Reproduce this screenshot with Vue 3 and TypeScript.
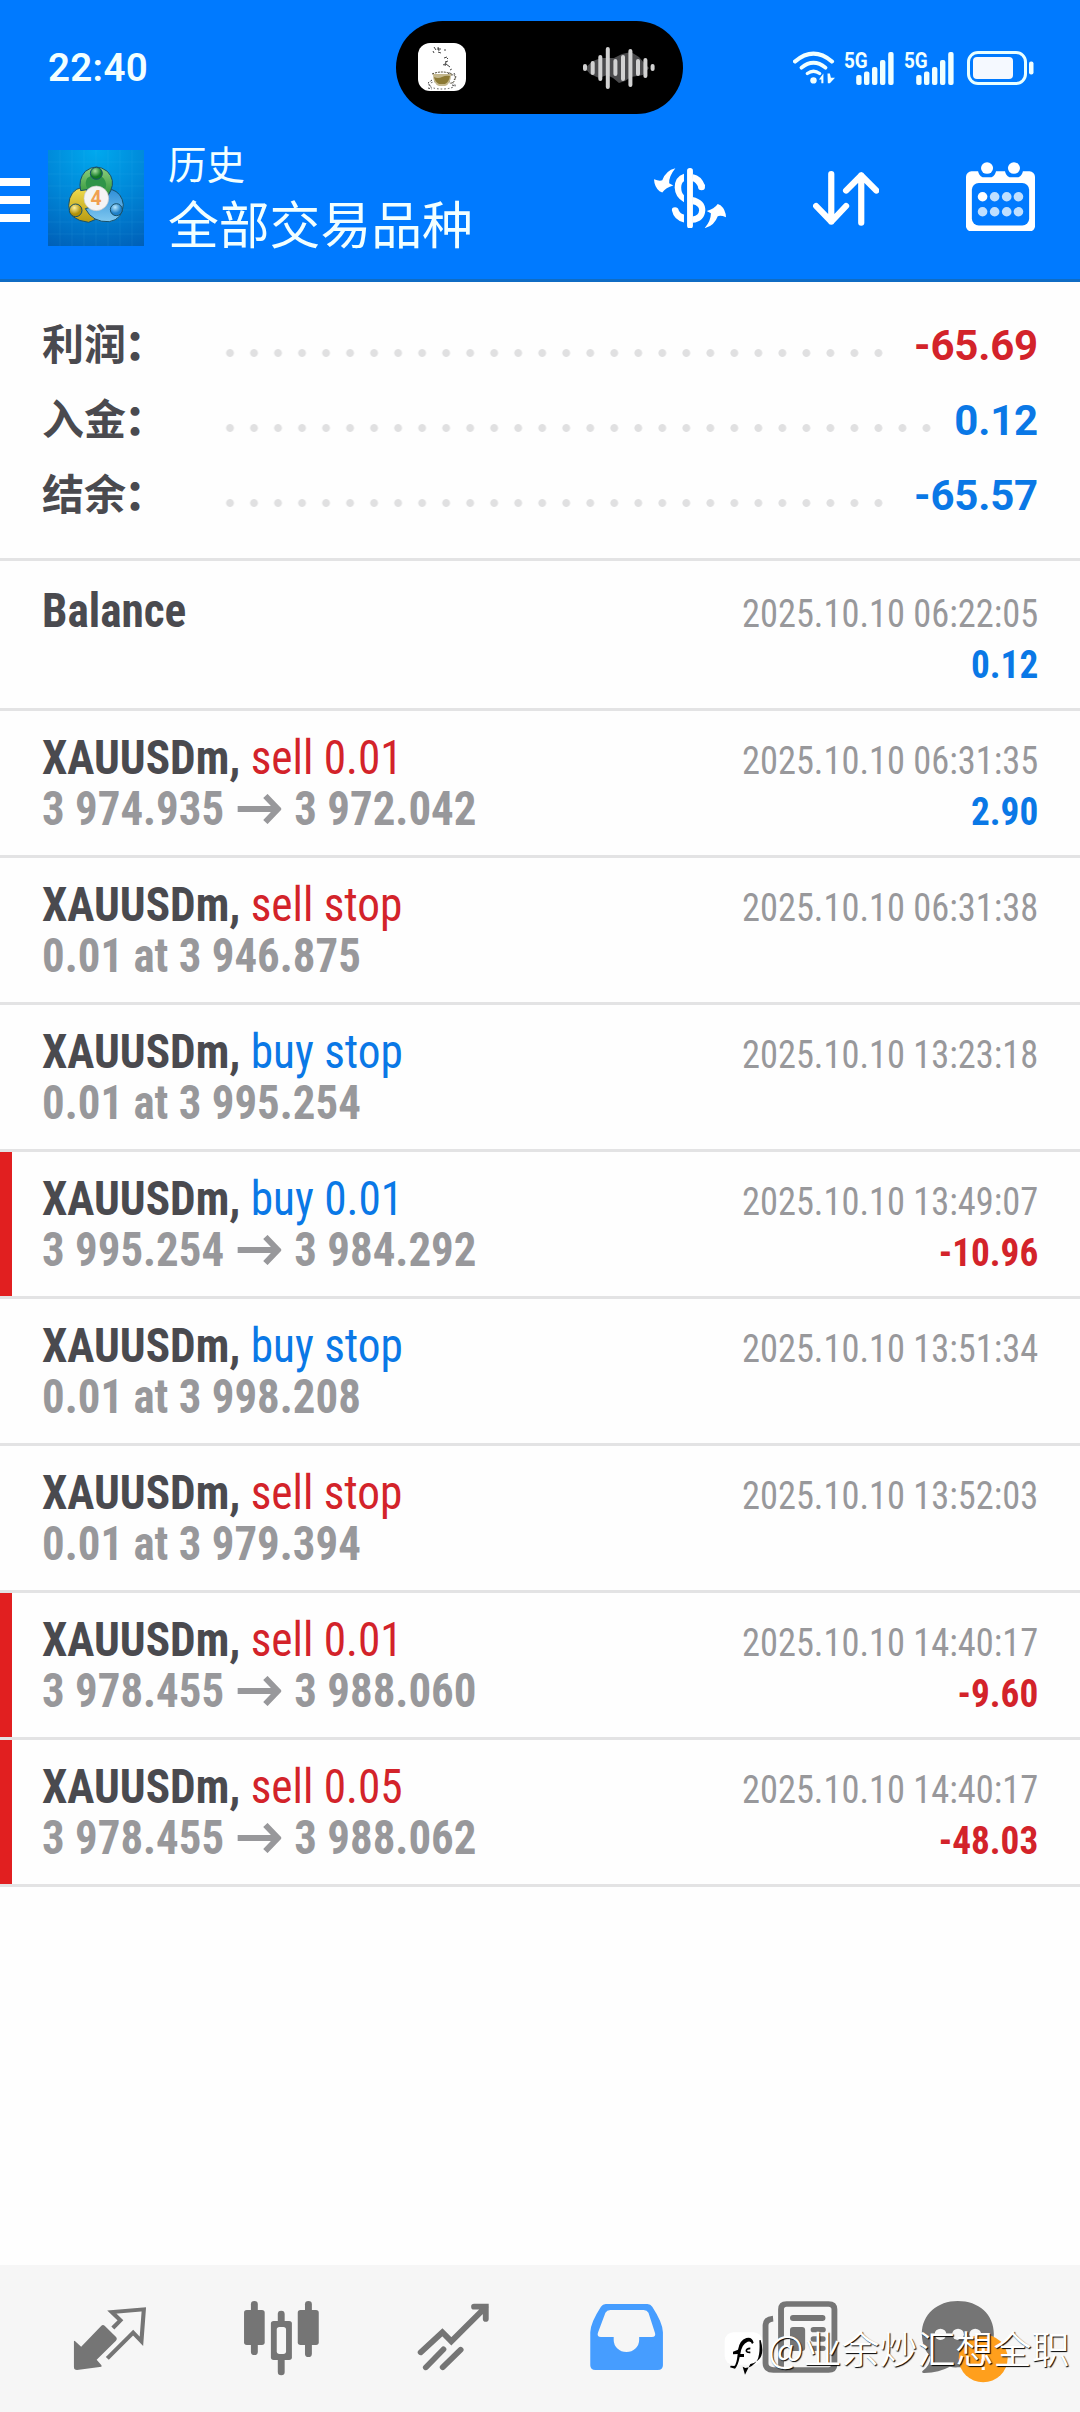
<script setup lang="ts">
interface Summary { label: string; value: string; tone: 'red' | 'blue'; dots: number }
interface Deal {
  symbol: string
  action?: string
  tone?: 'red' | 'blue'
  from?: string
  to?: string
  note?: string
  time: string
  profit?: string
  profitTone?: 'red' | 'blue'
  loss?: boolean
}

const summary: Summary[] = [
  { label: '利润', value: '-65.69', tone: 'red', dots: 28 },
  { label: '入金', value: '0.12', tone: 'blue', dots: 30 },
  { label: '结余', value: '-65.57', tone: 'blue', dots: 28 },
]

const deals: Deal[] = [
  { symbol: 'Balance', time: '2025.10.10 06:22:05', profit: '0.12', profitTone: 'blue' },
  { symbol: 'XAUUSDm,', action: 'sell 0.01', tone: 'red', from: '3 974.935', to: '3 972.042', time: '2025.10.10 06:31:35', profit: '2.90', profitTone: 'blue' },
  { symbol: 'XAUUSDm,', action: 'sell stop', tone: 'red', note: '0.01 at 3 946.875', time: '2025.10.10 06:31:38' },
  { symbol: 'XAUUSDm,', action: 'buy stop', tone: 'blue', note: '0.01 at 3 995.254', time: '2025.10.10 13:23:18' },
  { symbol: 'XAUUSDm,', action: 'buy 0.01', tone: 'blue', from: '3 995.254', to: '3 984.292', time: '2025.10.10 13:49:07', profit: '-10.96', profitTone: 'red', loss: true },
  { symbol: 'XAUUSDm,', action: 'buy stop', tone: 'blue', note: '0.01 at 3 998.208', time: '2025.10.10 13:51:34' },
  { symbol: 'XAUUSDm,', action: 'sell stop', tone: 'red', note: '0.01 at 3 979.394', time: '2025.10.10 13:52:03' },
  { symbol: 'XAUUSDm,', action: 'sell 0.01', tone: 'red', from: '3 978.455', to: '3 988.060', time: '2025.10.10 14:40:17', profit: '-9.60', profitTone: 'red', loss: true },
  { symbol: 'XAUUSDm,', action: 'sell 0.05', tone: 'red', from: '3 978.455', to: '3 988.062', time: '2025.10.10 14:40:17', profit: '-48.03', profitTone: 'red', loss: true },
]

const wave: [number, number, number][] = [
  [4, 20, 27], [11.7, 17, 31], [19.3, 11, 37], [26.8, 3, 45], [34.4, 15, 32],
  [42, 11, 37], [49.4, 5, 43], [57, 15, 32], [64.4, 14, 34], [71.6, 20, 27],
]
const signalBars: [number, number][] = [[11.2, 24], [19, 20.5], [27, 16], [35, 9], [43.2, 1]]
</script>

<template>
  <div class="screen">
    <header class="top">
      <div class="status">
        <span class="clock">22:40</span>
        <div class="island">
          <svg class="cup" viewBox="0 0 48 48">
            <rect width="48" height="48" rx="12" fill="#fff" />
            <g fill="none" stroke="#444" stroke-width="1">
              <path d="M16 4l2 3M15 8l1 2M20 4l1 4M19 6h4M20 9l3 1M26 7h2" />
              <path d="M26 15l3-1M29 15l1 1M27 19l3-1M28 19l-1 4M25 22l2-1M28 21l4 3" />
              <path d="M32 27l2-1M30 31l3-2M36 30l2 4-2 3M14 37l-4 3 3 4M34 42l4 1M10 45l4 1" stroke-dasharray="2 1.5" />
            </g>
            <ellipse cx="24" cy="42" rx="13" ry="4" fill="none" stroke="#555" stroke-width="1" stroke-dasharray="1.5 2" />
            <path d="M15 31h18q0 10-6 12h-6q-6-2-6-12z" fill="#c4b88e" />
            <path d="M16 34q4 2 8 0t8-1q-1 6-5 8h-6q-4-2-5-7z" fill="#8c7a35" />
            <path d="M33 32q5-1 4 4t-6 4M14 31q10-4 20 0" fill="none" stroke="#4b4530" stroke-width="1" stroke-dasharray="2 1" />
          </svg>
          <svg class="wave" viewBox="0 0 76 48">
            <path d="M4 24l8-7 8-3h13l8-4 9-2 8 5 6 7 4 4-6 7-12 2-6 4-6 2-6-5-6-3-8 3-9-4z" fill="#4b4b4d" />
            <path v-for="b in wave" :key="b[0]" :d="`M${b[0]} ${b[1] + 2}V${b[2] - 2}`" stroke="#d2d2d2" stroke-width="4" stroke-linecap="round" />
          </svg>
        </div>
        <div class="indicators">
          <svg class="wifi" viewBox="735 150 123 104" preserveAspectRatio="none" fill="none" stroke="#f0ffff" stroke-linecap="round">
            <path d="M741 182Q795 134 849 182" stroke-width="12.500" />
            <path d="M760 201Q795 171 830 201" stroke-width="11.500" />
            <path d="M777 219Q795 205 813 219" stroke-width="10" />
            <circle cx="795" cy="240" r="9.500" fill="#f0ffff" stroke="none" />
            <path d="M811 237L824 219V249H818V237zM836 219H843L846 232H858L843 249H837z" fill="#f0ffff" stroke="none" />
          </svg>
          <div v-for="n in 2" :key="n" class="signal">
            <span class="net">5G</span>
            <svg viewBox="0 0 50 34">
              <rect v-for="b in signalBars" :key="b[0]" :x="b[0]" :y="b[1]" width="5.4" :height="34 - b[1]" rx="2" fill="#f0ffff" />
            </svg>
          </div>
          <svg class="battery" viewBox="0 0 68 34">
            <rect x="1.5" y="1.5" width="57" height="31" rx="9.5" fill="none" stroke="#e8ffff" stroke-width="3" />
            <rect x="6" y="6" width="40" height="22" rx="4" fill="#f5f9ff" />
            <rect x="62" y="10.500" width="4.500" height="13" rx="2" fill="#f0ffff" />
          </svg>
        </div>
      </div>

      <div class="toolbar">
        <div class="menu"><i></i><i></i><i></i></div>
        <svg class="logo" viewBox="0 0 288 288">
          <defs>
            <radialGradient id="sky" cx=".5" cy="0" r="1.1"><stop offset="0" stop-color="#00a9ee" /><stop offset=".5" stop-color="#0087d8" /><stop offset="1" stop-color="#0060b8" /></radialGradient>
            <linearGradient id="green" x1="0" y1="0" x2="0" y2="1"><stop offset="0" stop-color="#8fd080" /><stop offset="1" stop-color="#1e8a2c" /></linearGradient>
            <linearGradient id="gold" x1="0" y1="0" x2="0" y2="1"><stop offset="0" stop-color="#f0dc50" /><stop offset="1" stop-color="#b89a10" /></linearGradient>
            <linearGradient id="aqua" x1="0" y1="0" x2="0" y2="1"><stop offset="0" stop-color="#2f8fd8" /><stop offset="1" stop-color="#80c8f0" /></linearGradient>
            <radialGradient id="bg" cx=".4" cy=".3"><stop offset="0" stop-color="#a8e0a0" /><stop offset="1" stop-color="#127a24" /></radialGradient>
            <radialGradient id="by" cx=".4" cy=".3"><stop offset="0" stop-color="#fff3a0" /><stop offset="1" stop-color="#b09008" /></radialGradient>
            <radialGradient id="bb" cx=".4" cy=".3"><stop offset="0" stop-color="#b8e8ff" /><stop offset="1" stop-color="#1f80c8" /></radialGradient>
          </defs>
          <rect width="288" height="288" fill="url(#sky)" />
          <path d="M36 0V288M72 0V288M108 0V288M144 0V288M180 0V288M216 0V288M252 0V288M0 36H288M0 72H288M0 108H288M0 144H288M0 180H288M0 216H288M0 252H288" stroke="#5cc8f0" stroke-opacity=".14" stroke-width="2" />
          <g stroke="#17506a" stroke-width="3">
            <path d="M104 112Q64 118 62 166Q60 210 122 217L150 205L120 165L116 116z" fill="url(#gold)" />
            <path d="M190 118Q222 128 226 164Q224 208 184 215Q134 218 112 176L168 160z" fill="url(#aqua)" />
            <path d="M112 64Q145 38 178 64Q203 90 188 122L172 150L160 112L98 122Q90 88 112 64z" fill="url(#green)" />
            <path d="M118 84Q145 62 168 86Q178 100 172 116L118 116Q108 98 118 84z" fill="#2f9448" stroke="none" />
            <circle cx="145" cy="70" r="18" fill="url(#bg)" />
            <circle cx="83" cy="181" r="19" fill="url(#by)" />
            <circle cx="205" cy="179" r="18" fill="url(#bb)" />
          </g>
          <circle cx="145" cy="145" r="37" fill="#f4f4f4" stroke="#c8c8c8" stroke-width="2" />
          <text x="144" y="165" text-anchor="middle" font-size="58" font-weight="700" fill="#f0a050" font-family="Roboto, sans-serif">4</text>
        </svg>
        <div class="titles">
          <span class="sub">历史</span>
          <span class="main">全部交易品种</span>
        </div>
        <div class="tools">
          <svg class="dollar" viewBox="331 503 209 182" preserveAspectRatio="none" fill="none" stroke="#fff">
            <rect x="427" y="503" width="17" height="182" rx="8" fill="#fff" stroke="none" />
            <path d="M443 532Q461 535 470 560" stroke-width="20" />
            <circle cx="469" cy="560" r="10" fill="#fff" stroke="none" />
            <path d="M418 520Q391 529 391 562Q392 592 418 606V585Q410 578 410 562Q410 548 418 543z" fill="#fff" stroke="none" />
            <path d="M443 590Q480 599 480 630Q478 664 443 668V649Q461 646 462 630Q462 616 443 612z" fill="#fff" stroke="none" />
            <path d="M383 631Q382 621 392 621Q401 621 403 631Q408 642 418 643V667Q389 660 383 631z" fill="#fff" stroke="none" />
            <path d="M331 537Q346 543 355 540Q365 511 393 504Q374 528 375 549L387 556Q365 562 355 577L347 573Q332 560 331 537z" fill="#fff" stroke="none" />
            <path transform="rotate(180 435.5 594)" d="M331 537Q346 543 355 540Q365 511 393 504Q374 528 375 549L387 556Q365 562 355 577L347 573Q332 560 331 537z" fill="#fff" stroke="none" />
          </svg>
          <svg class="sort" viewBox="792 512 193 165" preserveAspectRatio="none" fill="none" stroke="#fff" stroke-width="18" stroke-linecap="round" stroke-linejoin="round">
            <path d="M845 521V664M801 617L845 664L888 617M932 667V525M888 571L932 525L976 571" />
          </svg>
          <svg class="calendar" viewBox="1237 485 200 208" preserveAspectRatio="none">
            <rect x="1237" y="513" width="200" height="180" rx="16" fill="#fff" />
            <rect x="1254" y="548" width="166" height="127" rx="20" fill="#007aff" />
            <path d="M1272 512A26 26 0 0 0 1285 531H1311A26 26 0 0 0 1324 512zM1350 512A26 26 0 0 0 1363 531H1389A26 26 0 0 0 1402 512z" fill="#007aff" />
            <circle cx="1298" cy="503" r="17.500" fill="#fff" /><circle cx="1376" cy="503" r="17.500" fill="#fff" />
            <template v-for="y in [589, 634]" :key="y">
              <circle v-for="x in [1285, 1320, 1355, 1389]" :key="x" :cx="x" :cy="y" r="14" :fill="x === 1285 && y === 589 ? '#fff' : '#bfdfff'" />
            </template>
          </svg>
        </div>
      </div>
    </header>

    <section class="summary">
      <div v-for="s in summary" :key="s.label" class="sum-row">
        <span class="label">{{ s.label }}<span class="colon">：</span></span>
        <span class="dots" :style="{ width: s.dots * 24.02 + 'px' }"></span>
        <span class="sum-value" :class="s.tone">{{ s.value }}</span>
      </div>
    </section>

    <main class="deals">
      <article v-for="(d, i) in deals" :key="i" class="deal" :class="{ loss: d.loss, first: i === 0 }">
        <div class="left">
          <p class="name"><b>{{ d.symbol }}</b><template v-if="d.action">&nbsp;<span :class="d.tone">{{ d.action }}</span></template></p>
          <p v-if="d.from" class="detail">
            <span>{{ d.from }}</span>
            <svg class="arrow" viewBox="0 0 44 30" preserveAspectRatio="none"><path d="M0 15H40M28 2L40.500 15L28 28" fill="none" stroke="#98989b" stroke-width="6" /></svg>
            <span>{{ d.to }}</span>
          </p>
          <p v-else-if="d.note" class="detail">{{ d.note }}</p>
        </div>
        <div class="right">
          <p class="time">{{ d.time }}</p>
          <p v-if="d.profit" class="profit" :class="d.profitTone">{{ d.profit }}</p>
        </div>
      </article>
    </main>

    <nav class="nav">
      <svg viewBox="70 45 499.500 441" preserveAspectRatio="none">
        <path d="M217 272L236 290L294 228Q299 222 305 228L338 262Q342 267 337 272L281 329L295 346V350L224 360Q215 360 215 352V274z" fill="#757575" />
        <path d="M328 234L350 211L325 186L418 178L411 274L387 248L312 325" fill="none" stroke="#757575" stroke-width="12" />
      </svg>
      <svg viewBox="569.500 45 499.500 441" preserveAspectRatio="none" fill="#757575">
        <rect x="729" y="153" width="20" height="162" rx="10" /><rect x="709" y="180" width="60" height="105" rx="8" />
        <rect x="886" y="153" width="20" height="168" rx="10" /><rect x="865" y="180" width="61" height="105" rx="8" />
        <rect x="807" y="182" width="20" height="194" rx="10" /><rect x="787" y="213" width="61" height="117" rx="8" />
        <rect x="804" y="231" width="27" height="81" rx="8" fill="#f7f7f7" />
      </svg>
      <svg viewBox="1069 45 499.500 441" preserveAspectRatio="none" fill="none" stroke="#757575" stroke-width="17" stroke-linecap="round">
        <path d="M1222 307L1285 247L1311 274L1411 171M1377 170H1411V207" stroke-linejoin="miter" />
        <path d="M1237 352L1288 298M1286 352L1338 299" />
      </svg>
      <svg viewBox="0 45 499.500 441" preserveAspectRatio="none">
        <path fill-rule="evenodd" fill="#469dff" d="M191 162H312Q321 162 326 170Q357 219 357 247V346Q357 360 342 360H161Q146 360 146 346V247Q146 219 177 170Q182 162 191 162zM204 180Q194 180 190 188L168 249Q165 261 177 261H214V270A37 36 0 0 0 288 270V261H325Q337 261 334 249L315 188Q311 180 301 180z" />
      </svg>
      <svg viewBox="499.500 45 499.500 441" preserveAspectRatio="none" fill="none" stroke="#757575">
        <path d="M677 206Q655 208 655 226V340Q655 360 678 360H838Q855 360 855 343V178Q855 162 838 162H716Q700 162 700 178V350" stroke-width="17" />
        <path d="M735 204H820" stroke-width="18" stroke-linecap="round" />
        <rect x="726" y="231" width="44" height="72" rx="9" fill="#757575" stroke="none" />
        <path d="M794 239H822M794 267H822M794 295H822" stroke-width="16" stroke-linecap="round" />
      </svg>
      <svg viewBox="999 45 499.500 441" preserveAspectRatio="none">
        <path d="M1213 153C1155 153 1109 192 1109 252C1109 284 1122 308 1134 320Q1134 345 1110 364Q1108 370 1116 369Q1160 367 1190 350Q1202 353 1213 352C1274 352 1318 308 1318 252C1318 192 1274 153 1213 153z" fill="#757575" />
        <g fill="#f6f6f6"><circle cx="1163" cy="253" r="17" /><circle cx="1214" cy="253" r="17" /><circle cx="1264" cy="253" r="17" /></g>
        <ellipse cx="1287" cy="325" rx="71" ry="72" fill="#ff9f1c" />
        <path d="M1287 290V338M1287 350V360" stroke="#fff" stroke-width="9" />
      </svg>

      <div class="watermark">
        <svg viewBox="28 122 120 138">
          <rect x="30" y="129" width="113" height="97" rx="26" fill="#fff" />
          <path d="M138 152Q151 196 130 213Q120 222 107 224L91 256L84 232L92 236Q116 233 128 212Q137 194 134 153z" fill="#000" />
          <path d="M46 234L61 238Q70 229 75 203H88V194H77Q81 164 99 157Q110 154 112 164L117 160Q112 141 95 146Q75 152 70 181L55 187V195L69 194Q66 224 59 230L48 229z" fill="#000" />
          <path d="M107 177Q95 177 95 185Q97 190 107 189" fill="none" stroke="#000" stroke-width="5" />
        </svg>
        <span>@业余炒汇想全职</span>
      </div>
    </nav>
  </div>
</template>

<style>
body { background: #fff; }
</style>

<style scoped>
.screen { width: 1080px; height: 2412px; display: flex; flex-direction: column; background: #fefefe; font-family: Roboto, "Noto Sans CJK SC", sans-serif; overflow: hidden; }
p { margin: 0; }
svg { display: block; flex: none; }
.red { color: #d3232a; }
.blue { color: #0a78e6; }

.top { box-sizing: border-box; height: 282px; background: #007aff; border-bottom: 3px solid #0f6cc4; color: #f2ffff; flex: none; }
.status { height: 135px; display: flex; align-items: flex-start; }
.clock { width: 348px; margin-left: 48px; padding-top: 45px; font-size: 38.500px; line-height: 46px; font-weight: 600; letter-spacing: .3px; }
.island { box-sizing: border-box; width: 287px; height: 93px; margin-top: 21px; padding: 0 26px 0 22px; border-radius: 47px; background: #000; display: flex; align-items: center; justify-content: space-between; }
.cup { width: 48px; height: 48px; margin-top: -1px; }
.wave { width: 76px; height: 48px; }
.indicators { display: flex; align-items: flex-start; padding: 50.500px 0 0 110px; }
.wifi { width: 42px; height: 34px; }
.signal { width: 60px; height: 34px; display: flex; position: relative; margin-left: 10px; }
.signal + .signal { margin-left: 0; }
.signal svg { width: 50px; height: 34px; }
.net { position: absolute; left: -1px; top: -2px; font-size: 22.500px; line-height: 22px; font-weight: 700; transform: scaleX(.84); transform-origin: left; }
.battery { width: 68px; height: 34px; margin-left: 2px; }

.toolbar { height: 144px; display: flex; align-items: flex-start; }
.menu { width: 30px; margin-top: 43px; display: flex; flex-direction: column; gap: 10px; }
.menu i { height: 8px; background: #fff; }
.logo { width: 96px; height: 96px; margin: 15px 0 0 18px; }
.titles { width: 486px; margin-left: 24px; display: flex; flex-direction: column; }
.sub { font-size: 38.500px; line-height: 46px; margin-top: 8px; }
.main { font-size: 50.800px; line-height: 60px; margin-top: 8px; }
.tools { display: flex; align-items: flex-start; }
.dollar { width: 72px; height: 60.500px; margin-top: 32.500px; }
.sort { width: 66.500px; height: 55px; margin: 35.500px 0 0 86.500px; }
.calendar { width: 69px; height: 69.500px; margin: 26.500px 0 0 87px; }

.summary { box-sizing: border-box; height: 279px; padding: 26px 42px 0; border-bottom: 3px solid #e3e3e4; flex: none; }
.sum-row { height: 75px; display: flex; align-items: center; }
.label { width: 176px; margin-top: -7px; color: #4a4a4f; font: 700 42px/64px "Noto Sans CJK SC", sans-serif; white-space: nowrap; }
.colon { margin-left: -1.500px; font-weight: 900; }
.dots { height: 8px; margin-top: 15px; background: radial-gradient(circle at 12px 4px, #e0e0e1 3.500px, transparent 4.300px) 0 0 / 24.02px 8px repeat-x; }
.sum-value { margin-left: auto; font-size: 42px; line-height: 64px; font-weight: 700; letter-spacing: -.2px; }

.deals { flex: 1; }
.deal { box-sizing: border-box; height: 147px; padding: 21px 42px 0; display: flex; justify-content: space-between; border-bottom: 3px solid #e3e3e4; position: relative; font-family: "Roboto Condensed", Roboto, sans-serif; font-stretch: 75%; }
.deal.first { height: 150px; padding-top: 24px; }
.deal.loss::before { content: ""; position: absolute; left: 0; top: 0; bottom: 0; width: 12px; background: #e11f20; }
.name, .detail { font-size: 48px; line-height: 51px; height: 51px; white-space: nowrap; transform: scaleX(.943); transform-origin: left; }
.name b { color: #4a4a4f; }
.detail { display: flex; align-items: center; color: #98989b; font-weight: 700; transform: scaleX(.935); }
.arrow { width: 47px; height: 30px; margin: 1px 14px 0 14px; }
.right { text-align: right; }
.time { font-size: 39px; line-height: 51px; margin-top: 4px; color: #98989b; transform: scaleX(.934); transform-origin: right; }
.profit { font-size: 39px; line-height: 51px; font-weight: 700; transform: scaleX(.955); transform-origin: right; }

.nav { box-sizing: border-box; height: 147px; padding-left: 24px; display: flex; background: #f6f6f6; position: relative; flex: none; }
.nav > svg { width: 172px; height: 147px; }
.watermark { position: absolute; left: 724px; top: 54px; display: flex; align-items: flex-start; }
.watermark svg { width: 40px; height: 46px; margin-top: 11px; }
.watermark span { margin-left: 4px; font: 350 38px/56px "Noto Sans CJK SC", sans-serif; color: #fff; text-shadow: 1px 1px 1px #000; white-space: nowrap; }
</style>
